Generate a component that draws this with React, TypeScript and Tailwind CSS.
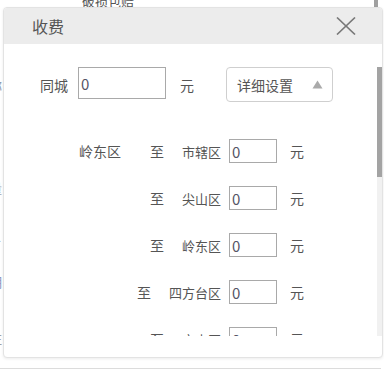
import React from "react";

const font = { fontFamily: '"Noto Sans CJK SC", "Noto Sans", sans-serif' };

function RouteRow({ from, to, first }: { from?: string; to: string; first?: boolean }) {
  return (
    <div className={`flex h-[24px] shrink-0 items-center text-[14px] text-[#555] ${first ? "mt-[37px]" : "mt-[23px]"}`}>
      <div className="w-[117px] shrink-0 text-right leading-none">{from ?? ""}</div>
      <div className="flex w-[100px] shrink-0 items-center justify-end leading-none">
        <span>至</span>
        <span className="ml-[18px] text-[13px]">{to}</span>
      </div>
      <div className="ml-[8px] flex h-[24px] w-[48px] shrink-0 items-center border border-[#a9a9a9] pl-[2px] text-[15px] leading-none text-[#556]">
        0
      </div>
      <span className="ml-[13px] leading-none">元</span>
    </div>
  );
}

export default function App() {
  return (
    <div className="relative h-[383px] w-[384px] overflow-hidden bg-white" style={font}>
      {/* page behind */}
      <div className="h-[7px] overflow-hidden pl-[82px]">
        <div className="mt-[-8px] text-[13px] leading-[18px] text-[#555]">破损包赔</div>
      </div>
      <div className="absolute left-[374px] top-0 h-[7px] w-[4px] bg-[#a0a0a0]" />
      <div className="absolute left-[-11px] top-[76px] text-[13px] text-[#8a9ab0]">称</div>
      <div className="absolute left-[-11px] top-[178px] text-[13px] text-[#9a9faa]">量</div>
      <div className="absolute left-[-12px] top-[226px] text-[13px] text-[#a09a90]">人</div>
      <div className="absolute left-[-11px] top-[272px] text-[13px] text-[#8a96c0]">明</div>
      <div className="absolute left-[-11px] top-[328px] text-[13px] text-[#a0a0a0]">注</div>
      <div className="absolute left-0 top-[368px] h-px w-[381px] bg-[#dcdcdc]" />

      {/* modal */}
      <div className="absolute left-[3px] top-[7px] flex h-[351px] w-[380px] flex-col overflow-hidden rounded-[4px] border border-[#e3e3e3] bg-white shadow-[0_1px_3px_rgba(0,0,0,0.08)]">
        <div className="flex h-[36px] shrink-0 items-center justify-between bg-[#ececec] pl-[28px] pr-[26px]">
          <span className="text-[16px] leading-none text-[#555]">收费</span>
          <svg width="20" height="18" viewBox="0 0 20 18">
            <line x1="1" y1="0.5" x2="19" y2="17.5" stroke="#777" strokeWidth="1.6" />
            <line x1="19" y1="0.5" x2="1" y2="17.5" stroke="#777" strokeWidth="1.6" />
          </svg>
        </div>
        <div className="flex flex-1 flex-col pt-[23px] pb-[21px]">
          <div className="flex h-[269px] overflow-hidden">
            <div className="flex flex-1 flex-col overflow-hidden">
              <div className="flex h-[35px] shrink-0 items-center text-[14px] text-[#555]">
                <span className="ml-[36px] leading-none">同城</span>
                <div className="ml-[10px] flex h-[32px] w-[88px] shrink-0 items-center self-start border border-[#a9a9a9] pl-[2px] text-[15px] leading-none text-[#556]">
                  0
                </div>
                <span className="ml-[14px] leading-none">元</span>
                <div className="ml-[32px] flex h-[35px] w-[107px] shrink-0 items-center justify-between rounded-[4px] border border-[#cfcfcf] pl-[10px] pr-[9px]">
                  <span className="leading-none">详细设置</span>
                  <svg width="11" height="9" viewBox="0 0 11 9">
                    <polygon points="5.5,0.5 10.5,8.5 0.5,8.5" fill="#aaa" />
                  </svg>
                </div>
              </div>
              <RouteRow from="岭东区" to="市辖区" first />
              <RouteRow to="尖山区" />
              <RouteRow to="岭东区" />
              <RouteRow to="四方台区" />
              <RouteRow to="宝山区" />
            </div>
            <div className="w-[5px] shrink-0 bg-[#f1f1f1]">
              <div className="h-[110px] w-full bg-[#a3a3a3]" />
            </div>
          </div>
        </div>
      </div>
    </div>
  );
}
